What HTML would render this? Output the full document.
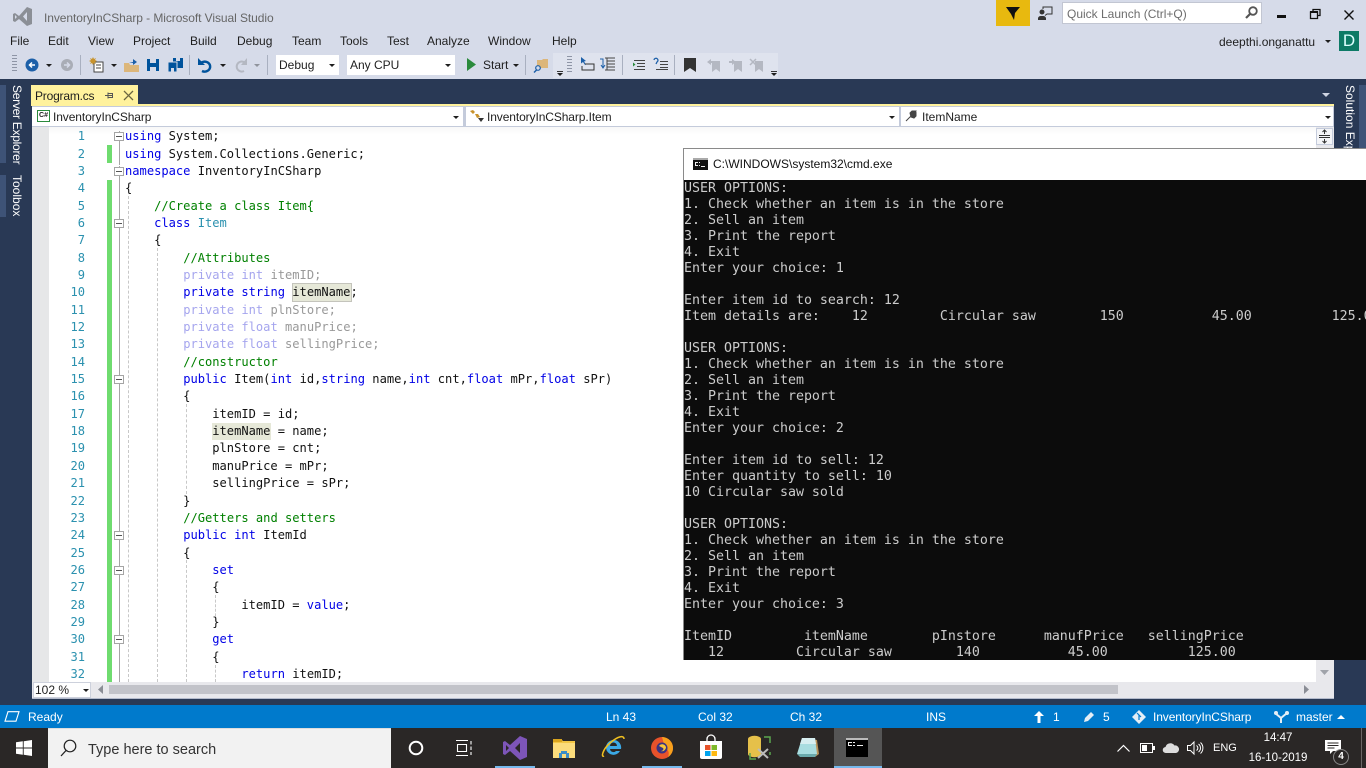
<!DOCTYPE html>
<html><head><meta charset="utf-8"><style>
html,body{margin:0;padding:0;width:1366px;height:768px;overflow:hidden;background:#293955;font-family:"Liberation Sans",sans-serif;font-size:12px;color:#1e1e1e}
.a{position:absolute}
.t{position:absolute;white-space:pre;line-height:16px}
svg{position:absolute;overflow:visible}
pre{margin:0;position:absolute;font-family:"DejaVu Sans Mono",monospace}
.k{color:#0000e6}.c{color:#008000}.y{color:#2b91af}.fk{color:#a5a5ee}.fn{color:#999}
.hl{background:#e6e8d8}
.dd{position:absolute;width:0;height:0;border-left:3px solid transparent;border-right:3px solid transparent;border-top:3px solid #1e1e1e}
.sep{position:absolute;width:1px;height:20px;background:#a9b0c0;top:55px}
.fold{position:absolute;left:114px;width:8px;height:7px;border:1px solid #a5a5a5;background:#fff}
.fold:after{content:"";position:absolute;left:1px;top:3px;width:6px;height:1px;background:#555}
.guide{position:absolute;width:0;border-left:1px dashed #c8c8c8}
.box{position:absolute;background:#fff;border:1px solid #cdd1dc;box-sizing:border-box}
.st{position:absolute;color:#fff;top:709px;line-height:16px;white-space:pre}
</style></head><body>
<!-- title / menu area -->
<div class="a" style="left:0;top:0;width:1366px;height:79px;background:#d6dbe9"></div>
<svg style="left:12px;top:7px" width="21" height="20" viewBox="0 0 21 20"><path d="M15 0l5 2v15l-5 2-8-7-4 3-2-1V7l2-1 4 3zM15 5l-4 4.500 4 4.500zM3 8v4l2-2z" fill="#8b8f96" fill-rule="evenodd"/></svg>
<div class="t" style="left:44px;top:10px;color:#666;font-size:12px;letter-spacing:-.07px">InventoryInCSharp - Microsoft Visual Studio</div>
<div class="t" style="left:10px;top:33px">File</div>
<div class="t" style="left:48px;top:33px">Edit</div>
<div class="t" style="left:88px;top:33px">View</div>
<div class="t" style="left:133px;top:33px">Project</div>
<div class="t" style="left:190px;top:33px">Build</div>
<div class="t" style="left:237px;top:33px">Debug</div>
<div class="t" style="left:292px;top:33px">Team</div>
<div class="t" style="left:340px;top:33px">Tools</div>
<div class="t" style="left:387px;top:33px">Test</div>
<div class="t" style="left:427px;top:33px">Analyze</div>
<div class="t" style="left:488px;top:33px">Window</div>
<div class="t" style="left:552px;top:33px">Help</div>
<!-- toolbar -->
<div class="a" style="left:12px;top:55px;width:5px;height:18px;background:repeating-linear-gradient(#8e95a6 0 1px,transparent 1px 3px)"></div>
<svg style="left:25px;top:58px" width="14" height="14"><circle cx="7" cy="7" r="6.500" fill="#1c5fa8"/><path d="M10 7H5M7 4.500L4.500 7 7 9.500" stroke="#fff" stroke-width="1.500" fill="none"/></svg>
<div class="dd" style="left:46px;top:64px"></div>
<svg style="left:60px;top:58px" width="14" height="14"><circle cx="7" cy="7" r="6" fill="#a9adb6"/><path d="M4 7h5M7 4.500L9.500 7 7 9.500" stroke="#d6dbe9" stroke-width="1.500" fill="none"/></svg>
<div class="sep" style="left:80px"></div>
<svg style="left:90px;top:57px" width="15" height="16"><path d="M4 5h9v10H4z" fill="#fff" stroke="#444"/><path d="M6 8h5M6 11h5" stroke="#444"/><path d="M3 0l1 2 2-1-1 2 2 1-2 1 1 2-2-1-1 2-1-2-2 1 1-2-2-1 2-1-1-2 2 1z" fill="#c8932c"/></svg>
<div class="dd" style="left:111px;top:64px"></div>
<svg style="left:124px;top:58px" width="15" height="14"><path d="M0 5h5l1 2h9v7H0z" fill="#dcb67a"/><path d="M5 4h4V1l4 3-4 3V5" fill="#1c5fa8"/></svg>
<svg style="left:147px;top:59px" width="12" height="12"><path d="M0 0h12v12H0z" fill="#00539c"/><path d="M3 0h6v4H3zM3 8h6v4H3z" fill="#d6dbe9"/></svg>
<svg style="left:168px;top:58px" width="15" height="14"><path d="M5 0h10v10H5z" fill="#00539c"/><path d="M8 0h4v3H8z" fill="#d6dbe9"/><path d="M0 4h9v10H0z" fill="#00539c" stroke="#d6dbe9"/><path d="M3 10h3v4H3z" fill="#d6dbe9"/></svg>
<div class="sep" style="left:189px"></div>
<svg style="left:198px;top:57px" width="15" height="16"><path d="M2 7a5.500 5 0 1 1 2 7" stroke="#00539c" stroke-width="2.400" fill="none"/><path d="M0 1v7h7z" fill="#00539c"/></svg>
<div class="dd" style="left:220px;top:64px"></div>
<svg style="left:234px;top:57px" width="14" height="16"><path d="M12 7a5 5 0 1 0-2 7" stroke="#b4b8c2" stroke-width="2" fill="none"/><path d="M13 1v7H7z" fill="#b4b8c2"/></svg>
<div class="dd" style="left:254px;top:64px;border-top-color:#8f939c"></div>
<div class="sep" style="left:267px"></div>
<div class="box" style="left:276px;top:55px;width:63px;height:20px;border:0"></div>
<div class="t" style="left:279px;top:57px">Debug</div>
<div class="dd" style="left:329px;top:64px"></div>
<div class="box" style="left:347px;top:55px;width:108px;height:20px;border:0"></div>
<div class="t" style="left:350px;top:57px">Any CPU</div>
<div class="dd" style="left:445px;top:64px"></div>
<svg style="left:467px;top:58px" width="10" height="13"><path d="M0 0l9 6.500L0 13z" fill="#2a8a3c"/></svg>
<div class="t" style="left:483px;top:57px">Start</div>
<div class="dd" style="left:513px;top:64px"></div>
<div class="sep" style="left:525px"></div>
<svg style="left:534px;top:58px" width="15" height="15"><path d="M3 2h5l1-1h5v9H3z" fill="#dcb67a"/><circle cx="4" cy="10" r="2.300" fill="#d6dbe9" stroke="#1c5fa8" stroke-width="1.200"/><path d="M2.500 12L0 14.500" stroke="#1c5fa8" stroke-width="1.500"/></svg>
<div class="a" style="left:553px;top:53px;width:13px;height:25px;background:#dfe3ee"></div>
<div class="a" style="left:557px;top:71px;width:6px;height:1px;background:#333"></div>
<div class="dd" style="left:557px;top:73px"></div>
<div class="a" style="left:566px;top:53px;width:212px;height:25px;background:#dfe3ee"></div>
<div class="a" style="left:567px;top:56px;width:5px;height:18px;background:repeating-linear-gradient(#8e95a6 0 1px,transparent 1px 3px)"></div>
<svg style="left:580px;top:57px" width="15" height="14"><path d="M1 0l5 4-2 .500 2 3-1 .500-2-3-2 1.500z" fill="#1c5fa8"/><path d="M5 7h9v6H2V9" fill="none" stroke="#333"/></svg>
<svg style="left:600px;top:57px" width="16" height="14"><path d="M5 1h10M7 4h8M7 7h8M7 10h8M5 13h10M7 1v12" stroke="#444" fill="none"/><path d="M0 2h3v8M1 8l2 3 2-3" stroke="#1c5fa8" fill="none"/></svg>
<div class="sep" style="left:622px"></div>
<svg style="left:633px;top:60px" width="12" height="10"><path d="M1 .500h11M4 3.500h8M4 6.500h8M1 9.500h11" stroke="#444"/><path d="M0 2.500l2.500 2-2.500 2" fill="#2a8a3c"/></svg>
<svg style="left:654px;top:58px" width="14" height="12"><path d="M6 3.500h8M6 6.500h8M6 9.500h8M2 11.500h12" stroke="#444"/><path d="M0 2a2 2 0 1 1 3 2L2 6" stroke="#1c5fa8" stroke-width="1.300" fill="none"/></svg>
<div class="sep" style="left:674px"></div>
<svg style="left:684px;top:58px" width="12" height="14"><path d="M0 0h12v14L6 10 0 14z" fill="#333"/></svg>
<svg style="left:707px;top:58px" width="14" height="14"><path d="M5 3h8v11l-4-3-4 3z" fill="#b4b8c2"/><path d="M0 4l4-3v2h3v2H4v2z" fill="#b4b8c2"/></svg>
<svg style="left:729px;top:58px" width="14" height="14"><path d="M5 3h8v11l-4-3-4 3z" fill="#b4b8c2"/><path d="M7 4L3 1v2H0v2h3v2z" fill="#b4b8c2"/></svg>
<svg style="left:750px;top:58px" width="14" height="14"><path d="M5 3h8v11l-4-3-4 3z" fill="#b4b8c2"/><path d="M0 1l6 6M6 1L0 7" stroke="#b4b8c2" stroke-width="1.500"/></svg>
<div class="a" style="left:771px;top:71px;width:6px;height:1px;background:#333"></div>
<div class="dd" style="left:771px;top:73px"></div>
<!-- top right -->
<div class="a" style="left:996px;top:0;width:34px;height:26px;background:#e8b90f"></div>
<svg style="left:1006px;top:7px" width="14" height="13"><path d="M0 0h14L9 6l-1 7-3-6z" fill="#111"/></svg>
<svg style="left:1038px;top:6px" width="15" height="14"><circle cx="4" cy="6" r="2.500" fill="#333"/><path d="M0 14v-2a3 3 0 0 1 3-2h2a3 3 0 0 1 3 2v2z" fill="#333"/><path d="M5 3V1h9v7H9L7 9.500" fill="none" stroke="#333"/></svg>
<div class="box" style="left:1062px;top:2px;width:200px;height:22px;background:#fff;border-color:#c2c6d2"></div>
<div class="t" style="left:1067px;top:6px;color:#6d6d6d">Quick Launch (Ctrl+Q)</div>
<svg style="left:1245px;top:6px" width="13" height="13"><circle cx="8" cy="5" r="3.800" fill="none" stroke="#555" stroke-width="1.800"/><path d="M5 8L1 12" stroke="#555" stroke-width="2.200"/></svg>
<div class="a" style="left:1277px;top:15px;width:9px;height:3px;background:#111"></div>
<svg style="left:1310px;top:9px" width="11" height="10"><path d="M3 2.500V.500h7v6H8M.500 3h7v6.500h-7z" fill="none" stroke="#111" stroke-width="1.300"/><path d="M0 3h8" stroke="#111" stroke-width="2"/></svg>
<svg style="left:1344px;top:10px" width="10" height="10"><path d="M.500.500l9 9M9.500.500l-9 9" stroke="#111" stroke-width="1.400"/></svg>
<div class="t" style="left:1219px;top:34px;font-size:12px">deepthi.onganattu</div>
<div class="dd" style="left:1325px;top:40px"></div>
<div class="a" style="left:1339px;top:31px;width:20px;height:20px;background:#0d7a66;color:#dff;font-size:17px;line-height:20px;text-align:center">D</div>
<!-- left side -->
<div class="a" style="left:0;top:85px;width:6px;height:78px;background:#3e5377"></div>
<div class="a" style="left:0;top:175px;width:6px;height:42px;background:#3e5377"></div>
<div class="t" style="left:9px;top:85px;color:#fff;writing-mode:vertical-rl;line-height:16px;letter-spacing:-.27px">Server Explorer</div>
<div class="t" style="left:9px;top:175px;color:#fff;writing-mode:vertical-rl;line-height:16px">Toolbox</div>
<div class="a" style="left:1359px;top:85px;width:7px;height:64px;background:#3e5377"></div>
<div class="t" style="left:1342px;top:85px;color:#fff;writing-mode:vertical-rl;line-height:16px;height:64px;overflow:hidden">Solution Explorer</div>
<!-- tab -->
<div class="a" style="left:31px;top:85px;width:107px;height:20px;background:#fff29d"></div>
<div class="t" style="left:35px;top:88px;color:#1e1e1e;letter-spacing:-.2px">Program.cs</div>
<svg style="left:105px;top:92px" width="9" height="7"><path d="M0 3.500h3M3 .500v6M3.500 1.500h4v4h-4M3.500 3.500H8" fill="none" stroke="#555"/></svg>
<svg style="left:124px;top:91px" width="9" height="9"><path d="M0 0l9 9M9 0L0 9" stroke="#6b6640" stroke-width="1.300"/></svg>
<div class="a" style="left:31px;top:104px;width:1303px;height:2px;background:#fff29d"></div>
<svg style="left:1322px;top:93px;" width="8" height="5"><path d="M0 0h8L4 4z" fill="#ced4e2"/></svg>
<!-- nav bar -->
<div class="a" style="left:32px;top:106px;width:1302px;height:21px;background:#c4cbdb"></div>
<div class="a" style="left:32px;top:107px;width:431px;height:19px;background:#fff"></div>
<div class="a" style="left:466px;top:107px;width:433px;height:19px;background:#fff"></div>
<div class="a" style="left:901px;top:107px;width:432px;height:19px;background:#fff"></div>
<div class="a" style="left:37px;top:110px;width:11px;height:10px;border:1px solid #2a8a3c;font:bold 7px/10px 'Liberation Sans',sans-serif;color:#222;text-align:center;background:#fff">C#</div>
<div class="t" style="left:53px;top:109px;letter-spacing:-.1px">InventoryInCSharp</div>
<div class="dd" style="left:453px;top:116px"></div>
<svg style="left:469px;top:109px" width="15" height="14"><path d="M1 2l3-1 2 2-2 2zM6 5l3 0 2 3-3 1z" fill="#c8932c"/><path d="M9 9h6l-3 4z" fill="#333"/></svg>
<div class="t" style="left:487px;top:109px;letter-spacing:-.1px">InventoryInCSharp.Item</div>
<div class="dd" style="left:889px;top:116px"></div>
<svg style="left:905px;top:110px" width="12" height="12"><path d="M1 11l6-6M5 3l2-2 4 0-1 2-1 0 0 1 1 0 1-1 0 3-2 2-3-1z" stroke="#444" fill="#444"/></svg>
<div class="t" style="left:922px;top:109px">ItemName</div>
<div class="dd" style="left:1325px;top:116px"></div>
<!-- editor -->
<div class="a" style="left:32px;top:127px;width:1302px;height:571px;background:#fff;overflow:hidden"></div>
<div class="a" style="left:32px;top:127px;width:17px;height:555px;background:#e6e7e8"></div>
<div class="a" style="left:49px;top:127px;width:1267px;height:8px;background:linear-gradient(#f3f3f3,#fff);opacity:.6"></div>
<pre style="left:60px;width:25px;top:128.300px;font-size:12.080px;line-height:17.350px;color:#2b91af;text-align:right;height:554px;overflow:hidden">1
2
3
4
5
6
7
8
9
10
11
12
13
14
15
16
17
18
19
20
21
22
23
24
25
26
27
28
29
30
31
32</pre>
<div class="a" style="left:107px;top:145px;width:5px;height:18px;background:#6fdc6f"></div>
<div class="a" style="left:107px;top:180px;width:5px;height:502px;background:#6fdc6f"></div>
<div class="a" style="left:119px;top:131px;width:1px;height:34px;background:#a5a5a5"></div>
<div class="a" style="left:119px;top:166px;width:1px;height:516px;background:#a5a5a5"></div>
<div class="fold" style="top:132px"></div>
<div class="fold" style="top:167px"></div>
<div class="fold" style="top:219px"></div>
<div class="fold" style="top:375px"></div>
<div class="fold" style="top:531px"></div>
<div class="fold" style="top:566px"></div>
<div class="fold" style="top:635px"></div>
<div class="guide" style="left:128px;top:196px;height:486px"></div>
<div class="guide" style="left:157px;top:248px;height:434px"></div>
<div class="guide" style="left:186px;top:404px;height:90px"></div>
<div class="guide" style="left:186px;top:560px;height:122px"></div>
<div class="guide" style="left:215px;top:595px;height:26px"></div>
<div class="guide" style="left:215px;top:665px;height:17px"></div>
<div class="a" style="left:292px;top:283px;width:58px;height:17px;background:#e6e8d8;border:1px solid #c4c4bc"></div>
<div class="a" style="left:212px;top:423px;width:59px;height:17px;background:#e6e8d8"></div>
<pre style="left:125px;top:128.300px;font-size:12.080px;line-height:17.350px;height:554px;width:555px;overflow:hidden;color:#111"><span class="k">using</span> System;
<span class="k">using</span> System.Collections.Generic;
<span class="k">namespace</span> InventoryInCSharp
{
    <span class="c">//Create a class Item{</span>
    <span class="k">class</span> <span class="y">Item</span>
    {
        <span class="c">//Attributes</span>
        <span class="fk">private int</span> <span class="fn">itemID;</span>
        <span class="k">private string</span> itemName;
        <span class="fk">private int</span> <span class="fn">plnStore;</span>
        <span class="fk">private float</span> <span class="fn">manuPrice;</span>
        <span class="fk">private float</span> <span class="fn">sellingPrice;</span>
        <span class="c">//constructor</span>
        <span class="k">public</span> Item(<span class="k">int</span> id,<span class="k">string</span> name,<span class="k">int</span> cnt,<span class="k">float</span> mPr,<span class="k">float</span> sPr)
        {
            itemID = id;
            itemName = name;
            plnStore = cnt;
            manuPrice = mPr;
            sellingPrice = sPr;
        }
        <span class="c">//Getters and setters</span>
        <span class="k">public int</span> ItemId
        {
            <span class="k">set</span>
            {
                itemID = <span class="k">value</span>;
            }
            <span class="k">get</span>
            {
                <span class="k">return</span> itemID;</pre>
<!-- right scroll -->
<div class="a" style="left:1316px;top:127px;width:18px;height:555px;background:#e8e8ec"></div>
<div class="a" style="left:1316px;top:128px;width:17px;height:17px;background:#f4f5f8;border:1px solid #c4cbdb;box-sizing:border-box"></div>
<svg style="left:1319px;top:130px" width="11" height="13"><path d="M0 5.500h11M0 7.500h11M5.500 0v4M5.500 9v4M3.500 2L5.500 0l2 2M3.500 11l2 2 2-2" stroke="#333" fill="none"/></svg>
<svg style="left:1320px;top:670px" width="9" height="5"><path d="M0 0h9L4.500 5z" fill="#a0a3aa"/></svg>
<!-- bottom scrollbar -->
<div class="a" style="left:32px;top:682px;width:1302px;height:16px;background:#e8e8ec"></div>
<div class="a" style="left:33px;top:682px;width:58px;height:16px;background:#fff;border:1px solid #cdd1dc;box-sizing:border-box"></div>
<div class="t" style="left:35px;top:682px">102 %</div>
<div class="dd" style="left:83px;top:689px"></div>
<svg style="left:98px;top:685px" width="5" height="9"><path d="M5 0v9L0 4.500z" fill="#8a8d95"/></svg>
<div class="a" style="left:109px;top:685px;width:1009px;height:9px;background:#c2c3c9"></div>
<svg style="left:1304px;top:685px" width="5" height="9"><path d="M0 0v9l5-4.500z" fill="#8a8d95"/></svg>
<div class="a" style="left:32px;top:698px;width:1302px;height:1px;background:#b4bbcc"></div>
<!-- cmd window -->
<div class="a" style="left:683px;top:148px;width:683px;height:512px;background:#fff;border:1px solid #8a8a8a;box-sizing:border-box;border-right:0"></div>
<div class="a" style="left:684px;top:180px;width:682px;height:480px;background:#0c0c0c;overflow:hidden"></div>
<svg style="left:693px;top:158px" width="15" height="12"><path d="M0 0h15v12H0z" fill="#111"/><path d="M0 0h15v2H0z" fill="#aaa"/><path d="M2 4h3v1H3v2h2v1H2zM6 4h1v1H6zM6 7h1v1H6zM8 8h4v1H8z" fill="#eee"/></svg>
<div class="t" style="left:713px;top:156px;color:#111;font-size:12px">C:\WINDOWS\system32\cmd.exe</div>
<pre style="left:684px;top:181px;width:682px;height:479px;overflow:hidden;color:#cccccc;font-size:13.290px;line-height:16px">USER OPTIONS:
1. Check whether an item is in the store
2. Sell an item
3. Print the report
4. Exit
Enter your choice: 1

Enter item id to search: 12
Item details are:    12         Circular saw        150           45.00          125.00

USER OPTIONS:
1. Check whether an item is in the store
2. Sell an item
3. Print the report
4. Exit
Enter your choice: 2

Enter item id to sell: 12
Enter quantity to sell: 10
10 Circular saw sold

USER OPTIONS:
1. Check whether an item is in the store
2. Sell an item
3. Print the report
4. Exit
Enter your choice: 3

ItemID         itemName        pInstore      manufPrice   sellingPrice
   12         Circular saw        140           45.00          125.00</pre>
<!-- status bar -->
<div class="a" style="left:0;top:705px;width:1366px;height:23px;background:#007acc"></div>
<svg style="left:4px;top:711px" width="16" height="11"><path d="M4 .700h11l-3 9.500H1z" fill="none" stroke="#fff" stroke-width="1.100"/></svg>
<div class="st" style="left:28px">Ready</div>
<div class="st" style="left:606px">Ln 43</div>
<div class="st" style="left:698px">Col 32</div>
<div class="st" style="left:790px">Ch 32</div>
<div class="st" style="left:926px">INS</div>
<svg style="left:1034px;top:711px" width="10" height="12"><path d="M5 0l5 5H6.500v7h-3V5H0z" fill="#fff"/></svg>
<div class="st" style="left:1053px">1</div>
<svg style="left:1084px;top:711px" width="11" height="11"><path d="M0 11l1-4 6-6 3 3-6 6z" fill="#e4eef6"/></svg>
<div class="st" style="left:1103px">5</div>
<svg style="left:1132px;top:710px" width="14" height="14"><path d="M7 0l7 7-7 7-7-7z" fill="#e4eef6"/><path d="M5 3l4 4M7 5v5" stroke="#007acc" stroke-width="1.200"/></svg>
<div class="st" style="left:1153px;letter-spacing:-.1px">InventoryInCSharp</div>
<svg style="left:1274px;top:711px" width="15" height="12"><path d="M1 2l6 5 6-5M7 7v5" stroke="#e4eef6" stroke-width="2" fill="none"/><circle cx="2" cy="2" r="2" fill="#e4eef6"/><circle cx="13" cy="2" r="2" fill="#e4eef6"/></svg>
<div class="st" style="left:1296px">master</div>
<svg style="left:1337px;top:715px" width="8" height="4"><path d="M0 4h8L4 0z" fill="#fff"/></svg>
<!-- taskbar -->
<div class="a" style="left:0;top:728px;width:1366px;height:40px;background:#2a2726"></div>
<svg style="left:16px;top:740px" width="16" height="16"><path d="M0 2.300L6.800 1.300v6.200H0zM7.700 1.200L16 0v7.500H7.700zM0 8.500h6.800v6.200L0 13.700zM7.700 8.500H16V16l-8.300-1.200z" fill="#fff"/></svg>
<div class="a" style="left:48px;top:728px;width:343px;height:40px;background:#f2f2f2;border-top:1px solid #ddd;box-sizing:border-box"></div>
<svg style="left:60px;top:739px" width="17" height="18"><circle cx="10" cy="7" r="5.800" fill="none" stroke="#222" stroke-width="1.200"/><path d="M6 11.500L1 17" stroke="#222" stroke-width="1.300"/></svg>
<div class="t" style="left:88px;top:741px;font-size:14.500px;line-height:18px;color:#333">Type here to search</div>
<svg style="left:408px;top:740px" width="16" height="16"><circle cx="8" cy="8" r="6.300" fill="none" stroke="#fff" stroke-width="2"/></svg>
<svg style="left:455px;top:740px" width="18" height="16"><path d="M1 .500h12M1 15.500h12M2.500 4.500h9v7h-9zM16 1v3.500M16 6.500v3.500M16 12v3" stroke="#fff" fill="none" stroke-width="1.100"/></svg>
<svg style="left:503px;top:736px" width="24" height="24"><path d="M17 0l7 3v18l-7 3L7 15l-5 4-2-1V6l2-1 5 4zM17 7l-5 5 5 5zM3 9v6l3-3z" fill="#7d55b8" fill-rule="evenodd"/></svg>
<div class="a" style="left:495px;top:766px;width:40px;height:2px;background:#76b9ed"></div>
<svg style="left:553px;top:739px" width="22" height="19"><path d="M0 0h8l2 2h12v17H0z" fill="#f2c644"/><path d="M0 4h22v15H0z" fill="#fbdc7c"/><path d="M0 0h9v3H0z" fill="#d9a41e"/><path d="M6 19v-5h2v-2h6v2h2v5z" fill="#3a8dc8"/><path d="M9 15h4v4H9z" fill="#fbdc7c"/></svg>
<svg style="left:602px;top:736px" width="23" height="23"><path d="M11.500 4a7.500 7.500 0 0 0-7.500 8 7.500 7.500 0 0 0 14 3h-4a3.500 3.500 0 0 1-6-2h11a7.500 7.500 0 0 0-7.500-9zM8 10a3.500 3.500 0 0 1 7 0z" fill="#3ba9e6" fill-rule="evenodd"/><path d="M2 20C-1 22 0 14 8 7S22-1 22 3" fill="none" stroke="#f0c020" stroke-width="1.500"/></svg>
<svg style="left:651px;top:737px" width="22" height="22"><circle cx="11" cy="11" r="11" fill="#e8522b"/><path d="M11 0a11 11 0 0 1 11 11c0 4-2 7-5 9 2-4 0-8-3-9z" fill="#f7a01c"/><circle cx="11" cy="11" r="5.500" fill="#3a3380"/><path d="M8 9c2-3 6-2 7 1 0 3-3 5-5 4 2 0 3-2 2-3z" fill="#f7c63a"/></svg>
<div class="a" style="left:642px;top:766px;width:40px;height:2px;background:#76b9ed"></div>
<svg style="left:699px;top:735px" width="24" height="25"><path d="M8 7V4a4 4 0 0 1 8 0v3" fill="none" stroke="#fff" stroke-width="1.300"/><path d="M1 6h22v16a2 2 0 0 1-2 2H3a2 2 0 0 1-2-2z" fill="#fff"/><path d="M6 10h5.500v5H6z" fill="#e7532b"/><path d="M12.500 10H18v5h-5.500z" fill="#7eb92a"/><path d="M6 16h5.500v5H6z" fill="#00a4ef"/><path d="M12.500 16H18v5h-5.500z" fill="#fdb913"/></svg>
<svg style="left:748px;top:736px" width="25" height="24"><path d="M0 3a6 3 0 0 1 13 0v15a6 3 0 0 1-13 0z" fill="#e5c04a"/><path d="M16 1h6v6M2 17v6h6M22 16v3" fill="none" stroke="#5ba64f" stroke-width="1.500"/><path d="M10 22l10-9M10 13l10 9" stroke="#bbb" stroke-width="2"/></svg>
<svg style="left:797px;top:737px" width="23" height="22"><path d="M6 1l14 2 2 14-4 3-8-1z" fill="#b8925a"/><path d="M5 1h13l2 16H0z" fill="#a9dde0"/><path d="M5 1h13l1 6H3z" fill="#d7eef0"/><path d="M0 17h20l-2 3H3z" fill="#6aa9ac"/></svg>
<div class="a" style="left:834px;top:728px;width:48px;height:40px;background:#555"></div>
<div class="a" style="left:834px;top:766px;width:48px;height:2px;background:#76b9ed"></div>
<svg style="left:846px;top:738px" width="22" height="19"><path d="M0 0h22v19H0z" fill="#000"/><path d="M0 0h22v2H0z" fill="#bbb"/><path d="M2 4h4v1H3v2h3v1H2zM7 4h2v1H7zM7 7h2v1H7zM11 7h6v1h-6z" fill="#eee"/></svg>
<svg style="left:1117px;top:744px" width="13" height="8"><path d="M.500 7.500l6-6 6 6" fill="none" stroke="#fff" stroke-width="1.200"/></svg>
<svg style="left:1140px;top:743px" width="15" height="10"><path d="M.500.500h12v9H.500z" fill="none" stroke="#fff"/><path d="M2 2h5v6H2z" fill="#fff"/><path d="M13 3h2v4h-2z" fill="#fff"/></svg>
<svg style="left:1163px;top:743px" width="16" height="10"><path d="M3 10a3 3 0 0 1-.500-6 5 5 0 0 1 9-1.500A3.800 3.800 0 0 1 13 10z" fill="#ddd"/></svg>
<svg style="left:1187px;top:741px" width="16" height="14"><path d="M.500 4.500h3L7 1v12L3.500 9.500h-3z" fill="none" stroke="#fff"/><path d="M9.500 4.500a3 3 0 0 1 0 5M11.500 3a5 5 0 0 1 0 8M13.500 1.500a7.500 7.500 0 0 1 0 11" fill="none" stroke="#fff"/></svg>
<div class="t" style="left:1213px;top:740px;color:#fff;font-size:11px">ENG</div>
<div class="t" style="left:1245px;top:730px;width:66px;text-align:center;color:#fff;font-size:11.500px">14:47</div>
<div class="t" style="left:1245px;top:750px;width:66px;text-align:center;color:#fff;font-size:11.500px">16-10-2019</div>
<svg style="left:1325px;top:740px" width="16" height="14"><path d="M0 0h16v11H8l-3 3v-3H0z" fill="#fff"/><path d="M2.500 3h11M2.500 5.500h11M2.500 8h7" stroke="#2a2726"/></svg>
<div class="a" style="left:1333px;top:749px;width:14px;height:14px;border:1px solid #888;border-radius:50%;background:#2a2726;color:#fff;font:bold 10px/14px 'Liberation Sans',sans-serif;text-align:center">4</div>
<div class="a" style="left:1361px;top:728px;width:1px;height:40px;background:#6a6766"></div>
</body></html>
